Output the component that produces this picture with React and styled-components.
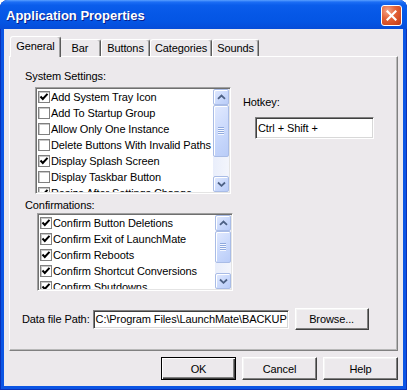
import React from 'react';
import styled, { createGlobalStyle } from 'styled-components';

const FACE = '#ECE9EC';
const FONT = '"Liberation Sans", Arial, sans-serif';

const GlobalStyle = createGlobalStyle`
  html, body { margin: 0; padding: 0; }
  body { background: #ffffff; font-family: ${FONT}; }
  * { box-sizing: border-box; }
`;

const Window = styled.div`
  width: 407px;
  height: 390px;
  display: flex;
  flex-direction: column;
  background: #0B55E4;
  border-radius: 8px 8px 0 0;
  overflow: hidden;
  box-shadow: inset 1px 0 #0A31B8, inset -1px 0 #0A31B8, inset 0 -1px #0A31B8;
`;

const TitleBar = styled.div`
  height: 29px;
  flex: none;
  display: flex;
  align-items: center;
  justify-content: space-between;
  padding: 0 5px 0 6px;
  background: linear-gradient(180deg, #5AA0FF 0%, #1C6EF5 7%, #0A5DEB 18%, #0658E7 45%, #0455E4 75%, #064CD8 100%);
`;

const Title = styled.span`
  color: #ffffff;
  font: bold 13px ${FONT};
  text-shadow: 1px 1px 0 #0A1E8A;
  padding-top: 1px;
`;

const CloseButton = styled.div`
  width: 21px;
  height: 21px;
  margin-top: 1px;
  border: 1px solid #ffffff;
  border-radius: 3px;
  background: radial-gradient(circle at 30% 25%, #F4A68C 0%, #E4643A 40%, #D24A22 75%, #B8361A 100%);
  display: flex;
  align-items: center;
  justify-content: center;
`;

const Body = styled.div`
  flex: 1;
  margin: 0 4px 4px;
  background: ${FACE};
  display: flex;
  flex-direction: column;
  padding: 7px 5px 6px;
`;

const TabStrip = styled.div`
  height: 20px;
  flex: none;
  display: flex;
  align-items: flex-end;
  padding-left: 3px;
`;

const Tab = styled.div`
  position: relative;
  width: ${p => (p.$active ? p.$w + 4 : p.$w)}px;
  height: ${p => (p.$active ? 21 : 17)}px;
  margin: ${p => (p.$active ? '0 -2px -1px -2px' : '0')};
  z-index: ${p => (p.$active ? 2 : 1)};
  background: ${FACE};
  border-top: 1px solid #ffffff;
  border-left: 1px solid #ffffff;
  border-right: 1px solid #5a5a5a;
  border-radius: 3px 3px 0 0;
  box-shadow: inset -1px 0 #a0a0a0;
  display: flex;
  align-items: center;
  justify-content: center;
  padding-bottom: ${p => (p.$active ? 3 : 0)}px;
  font-size: 11px;
  letter-spacing: -0.1px;
  color: #000;
`;

const Panel = styled.div`
  flex: 1;
  display: flex;
  flex-direction: column;
  border: 1px solid;
  border-color: #ffffff #808080 #808080 #ffffff;
  box-shadow: inset -1px -1px #b8b8b8;
  padding: 13px 0 0 15px;
`;

const Label = styled.div`
  height: 13px;
  line-height: 13px;
  font-size: 11px;
  letter-spacing: -0.1px;
  color: #000;
  white-space: nowrap;
  margin-top: ${p => p.$mt || 0}px;
`;

const Row = styled.div`
  display: flex;
  align-items: flex-start;
  margin-top: ${p => p.$mt || 0}px;
  margin-left: ${p => p.$ml || 0}px;
`;

const ListBox = styled.div`
  width: 196px;
  height: ${p => p.$h}px;
  margin-left: ${p => p.$indent}px;
  flex: none;
  display: flex;
  background: #ffffff;
  border: 1px solid;
  border-color: #a0a0a0 #ffffff #ffffff #a0a0a0;
  box-shadow: inset 1px 1px #6f6f6f, inset -1px -1px #e4e4e4;
  padding: 1px;
`;

const Items = styled.div`
  flex: 1;
  overflow: hidden;
  display: flex;
  flex-direction: column;
  padding-left: 1px;
`;

const Item = styled.div`
  height: 16px;
  flex: none;
  display: flex;
  align-items: center;
  font-size: 11px;
  letter-spacing: -0.1px;
  white-space: nowrap;
  color: #000;
`;

const CheckBox = styled.span`
  width: 12px;
  height: 12px;
  flex: none;
  margin-right: 1px;
  border: 1px solid #808080;
  box-shadow: inset 1px 1px #c8c8c8;
  background: #ffffff;
  display: flex;
  align-items: center;
  justify-content: center;
`;

const ScrollBar = styled.div`
  width: 16px;
  flex: none;
  display: flex;
  flex-direction: column;
  background: linear-gradient(90deg, #F4F5FB 0%, #EDF1FB 100%);
`;

const ScrollButton = styled.div`
  height: ${p => p.$h || 16}px;
  flex: none;
  border: 1px solid #A9BCE6;
  border-radius: 2px;
  box-shadow: inset 1px 1px #ffffff;
  background: linear-gradient(135deg, #E2EAFE 0%, #CBDAFC 50%, #B9CCF8 100%);
  display: flex;
  align-items: center;
  justify-content: center;
`;

const Track = styled.div`
  flex: 1;
  background: linear-gradient(90deg, #E9EEFB 0%, #F3F5FC 100%);
`;

const HotkeyCol = styled.div`
  display: flex;
  flex-direction: column;
  padding-top: 9px;
  margin-left: 12px;
`;

const TextField = styled.div`
  width: ${p => p.$w}px;
  height: ${p => p.$h}px;
  flex: none;
  margin-top: ${p => p.$mt || 0}px;
  margin-left: ${p => p.$ml || 0}px;
  background: #ffffff;
  border: 1px solid;
  border-color: #808080 #ffffff #ffffff #808080;
  box-shadow: inset 1px 1px #404040, inset -1px -1px #d8d8d8;
  padding: 0 2px;
  display: flex;
  align-items: center;
  font-size: 11px;
  letter-spacing: -0.1px;
  color: #000;
  white-space: nowrap;
  overflow: hidden;
`;

const PathRow = styled.div`
  display: flex;
  align-items: center;
  margin-top: 17px;
  margin-left: -3px;
  height: 22px;
`;

const Button = styled.button`
  width: ${p => p.$w || 75}px;
  height: ${p => p.$h || 23}px;
  flex: none;
  margin-left: ${p => p.$ml || 0}px;
  padding: 0;
  font: 11px ${FONT};
  letter-spacing: -0.1px;
  color: #000;
  background: ${FACE};
  border: 1px solid;
  border-color: ${p => (p.$default ? '#000000' : '#ffffff #404040 #404040 #ffffff')};
  box-shadow: ${p =>
    p.$default
      ? 'inset 1px 1px #ffffff, inset -1px -1px #404040, inset -2px -2px #808080'
      : 'inset -1px -1px #808080, inset 1px 1px #f4f4f4'};
`;

const Footer = styled.div`
  display: flex;
  justify-content: flex-end;
  gap: 6px;
  margin-top: 6px;
  flex: none;
`;

const Check = () => (
  <svg width="10" height="10" viewBox="0 0 10 10">
    <polyline points="1.5,4.5 3.8,7 8.5,1.8" fill="none" stroke="#000" strokeWidth="2" />
  </svg>
);

const Arrow = ({ down }) => (
  <svg width="9" height="6" viewBox="0 0 9 6">
    <polyline
      points={down ? '1,1.5 4.5,4.8 8,1.5' : '1,4.8 4.5,1.5 8,4.8'}
      fill="none"
      stroke="#4D6185"
      strokeWidth="1.8"
    />
  </svg>
);

const Grip = () => (
  <svg width="8" height="8" viewBox="0 0 8 8">
    {[0, 2, 4, 6].map(y => (
      <g key={y}>
        <rect x="1" y={y} width="6" height="1" fill="#8FA9DD" />
        <rect x="1" y={y + 1} width="6" height="1" fill="#F4F7FF" />
      </g>
    ))}
  </svg>
);

const Scroll = ({ thumb }) => (
  <ScrollBar>
    <ScrollButton><Arrow /></ScrollButton>
    <ScrollButton $h={thumb}><Grip /></ScrollButton>
    <Track />
    <ScrollButton><Arrow down /></ScrollButton>
  </ScrollBar>
);

const systemItems = [
  ['Add System Tray Icon', true],
  ['Add To Startup Group', false],
  ['Allow Only One Instance', false],
  ['Delete Buttons With Invalid Paths', false],
  ['Display Splash Screen', true],
  ['Display Taskbar Button', false],
  ['Resize After Settings Change', true],
];

const confirmItems = [
  ['Confirm Button Deletions', true],
  ['Confirm Exit of LaunchMate', true],
  ['Confirm Reboots', true],
  ['Confirm Shortcut Conversions', true],
  ['Confirm Shutdowns', true],
];

const CheckList = ({ items, h, indent, thumb }) => (
  <ListBox $h={h} $indent={indent}>
    <Items>
      {items.map(([label, on]) => (
        <Item key={label}>
          <CheckBox>{on && <Check />}</CheckBox>
          {label}
        </Item>
      ))}
    </Items>
    <Scroll thumb={thumb} />
  </ListBox>
);

const tabs = [
  ['General', 47],
  ['Bar', 42],
  ['Buttons', 49],
  ['Categories', 62],
  ['Sounds', 47],
];

export default function App() {
  return (
    <>
      <GlobalStyle />
      <Window>
        <TitleBar>
          <Title>Application Properties</Title>
          <CloseButton>
            <svg width="11" height="11" viewBox="0 0 11 11">
              <path d="M1.5 1.5 L9.5 9.5 M9.5 1.5 L1.5 9.5" stroke="#fff" strokeWidth="2.2" strokeLinecap="square" />
            </svg>
          </CloseButton>
        </TitleBar>
        <Body>
          <TabStrip>
            {tabs.map(([name, w], i) => (
              <Tab key={name} $w={w} $active={i === 0}>{name}</Tab>
            ))}
          </TabStrip>
          <Panel>
            <Label>System Settings:</Label>
            <Row $mt={4}>
              <CheckList items={systemItems} h={107} indent={10} thumb={52} />
              <HotkeyCol>
                <Label>Hotkey:</Label>
                <TextField $w={119} $h={22} $mt={8} $ml={12}>Ctrl + Shift +</TextField>
              </HotkeyCol>
            </Row>
            <Label $mt={5}>Confirmations:</Label>
            <Row $mt={1}>
              <CheckList items={confirmItems} h={78} indent={12} thumb={32} />
            </Row>
            <PathRow>
              <Label>Data file Path:</Label>
              <TextField $w={196} $h={19} $ml={3}>{'C:\\Program Files\\LaunchMate\\BACKUP'}</TextField>
              <Button $w={74} $h={22} $ml={6}>Browse...</Button>
            </PathRow>
          </Panel>
          <Footer>
            <Button $default>OK</Button>
            <Button>Cancel</Button>
            <Button>Help</Button>
          </Footer>
        </Body>
      </Window>
    </>
  );
}
